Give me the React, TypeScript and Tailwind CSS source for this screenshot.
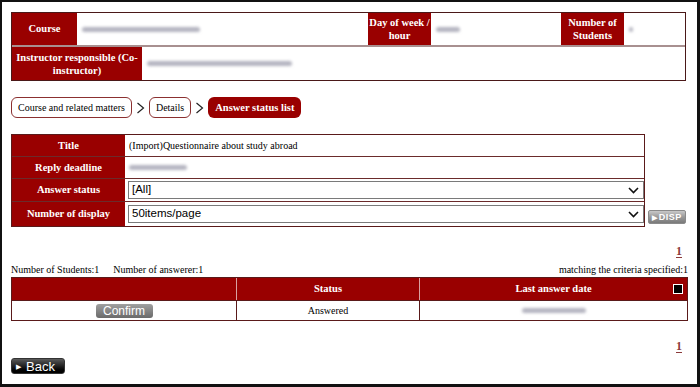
import React from "react";

const serif = { fontFamily: '"Liberation Serif", "Times New Roman", serif' };
const sans = { fontFamily: '"Liberation Sans", Arial, sans-serif' };

function Chevron() {
  return (
    <svg width="11" height="7" viewBox="0 0 11 7" className="shrink-0">
      <path d="M1 1 L5.5 5.5 L10 1" fill="none" stroke="#111" strokeWidth="1.6" />
    </svg>
  );
}

function SelectBox({ value }: { value: string }) {
  return (
    <div
      className="flex h-[18px] w-[516px] items-center justify-between border border-[#7a7a7a] bg-white pl-[3px] pr-[4px] text-[11.5px] leading-none text-black"
      style={sans}
    >
      <span>{value}</span>
      <Chevron />
    </div>
  );
}

function Blur({ w }: { w: number }) {
  return <div className="h-[5px] rounded-full bg-[#b4b4c0] blur-[1.5px]" style={{ width: w }} />;
}

function Crumb({ label }: { label: string }) {
  return (
    <div className="flex h-[21px] items-center rounded-[6px] border border-[#8b3030] bg-white px-[6px] text-[10px] text-black">
      {label}
    </div>
  );
}

function Arrow() {
  return (
    <svg width="9" height="14" viewBox="0 0 9 14" className="mx-[4px]">
      <path d="M1.5 2 L7.5 7 L1.5 12" fill="none" stroke="#222" strokeWidth="1.2" />
    </svg>
  );
}

export default function App() {
  return (
    <div
      className="box-border h-[387px] w-[700px] overflow-hidden border-b-[3px] border-l-2 border-r-[3px] border-t-2 border-[#111] bg-white"
      style={serif}
    >
      <div className="pl-[9px] pr-[11px] pt-[10px]">
        {/* Top info table */}
        <div className="w-[675px] border border-[#4a1818]">
          <div className="flex h-[34px] border-b-2 border-[#a89090]">
            <div className="flex w-[65px] items-center justify-center bg-[#990000] text-[10.5px] font-bold text-white">
              Course
            </div>
            <div className="flex w-[291px] items-center pl-[5px]">
              <Blur w={118} />
            </div>
            <div className="flex w-[63px] items-center justify-center bg-[#990000] text-center text-[10.5px] font-bold leading-[13px] text-white">
              Day of week / hour
            </div>
            <div className="flex w-[130px] items-center pl-[5px]">
              <Blur w={24} />
            </div>
            <div className="flex w-[63px] items-center justify-center bg-[#990000] text-center text-[10.5px] font-bold leading-[13px] text-white">
              Number of Students
            </div>
            <div className="flex flex-1 items-center pl-[5px]">
              <Blur w={4} />
            </div>
          </div>
          <div className="flex h-[33px]">
            <div className="flex w-[130px] items-center justify-center bg-[#990000] px-[2px] text-center text-[10.5px] font-bold leading-[13px] text-white">
              Instructor responsible (Co-instructor)
            </div>
            <div className="flex flex-1 items-center pl-[5px]">
              <Blur w={145} />
            </div>
          </div>
        </div>

        {/* Breadcrumb */}
        <div className="mt-[16px] flex items-center">
          <Crumb label="Course and related matters" />
          <Arrow />
          <Crumb label="Details" />
          <Arrow />
          <div className="flex h-[21px] items-center rounded-[6px] bg-[#990000] px-[7px] text-[10.5px] font-bold text-white">
            Answer status list
          </div>
        </div>

        {/* Form table */}
        <div className="mt-[16px] flex items-end">
          <div className="w-[637px] border border-[#5a1a1a]">
            <div className="flex h-[22px] border-b border-[#6b2b2b]">
              <div className="flex w-[113px] items-center justify-center bg-[#990000] text-[10.5px] font-bold text-white">
                Title
              </div>
              <div className="flex flex-1 items-center pl-[4px] text-[10px] text-black">
                (Import)Questionnaire about study abroad
              </div>
            </div>
            <div className="flex h-[22px] border-b border-[#6b2b2b]">
              <div className="flex w-[113px] items-center justify-center bg-[#990000] text-[10.5px] font-bold text-white">
                Reply deadline
              </div>
              <div className="flex flex-1 items-center pl-[4px]">
                <Blur w={58} />
              </div>
            </div>
            <div className="flex h-[23px] border-b border-[#6b2b2b]">
              <div className="flex w-[113px] items-center justify-center bg-[#990000] text-[10.5px] font-bold text-white">
                Answer status
              </div>
              <div className="flex flex-1 items-center pl-[3px]">
                <SelectBox value="[All]" />
              </div>
            </div>
            <div className="flex h-[24px]">
              <div className="flex w-[113px] items-center justify-center bg-[#990000] text-[10.5px] font-bold text-white">
                Number of display
              </div>
              <div className="flex flex-1 items-center pl-[3px]">
                <SelectBox value="50items/page" />
              </div>
            </div>
          </div>
          <div
            className="mb-[3px] ml-[3px] flex h-[14px] w-[38px] items-center justify-center rounded-[2px] border border-[#8a8a8a] bg-gradient-to-b from-[#c8c8c8] via-[#9a9a9a] to-[#7a7a7a] text-[9px] font-bold leading-none tracking-[0.5px] text-white"
            style={sans}
          >
            <span className="mr-[1px] text-[7px]">▶</span>DISP
          </div>
        </div>

        {/* Pager */}
        <div className="mt-[15px] flex justify-end pr-[4px]">
          <span className="text-[12px] font-bold text-[#8b3a3a] underline underline-offset-2">1</span>
        </div>

        {/* Counts */}
        <div className="mt-[3px] flex w-[677px] items-end justify-between text-[10px] leading-[13px] text-black">
          <span>
            Number of Students:1<span className="inline-block w-[14px]" />Number of answerer:1
          </span>
          <span>matching the criteria specified:1</span>
        </div>

        {/* Results table */}
        <div className="mt-[1px] w-[677px] border border-[#5a1a1a]">
          <div className="flex h-[22px] bg-[#990000] text-[10.5px] font-bold text-white">
            <div className="w-[225px] border-r border-[#d9a0a0]" />
            <div className="flex w-[183px] items-center justify-center border-r border-[#d9a0a0]">Status</div>
            <div className="relative flex flex-1 items-center justify-center">
              Last answer date
              <div className="absolute right-[4px] top-[6px] h-[10px] w-[10px] border border-white bg-black" />
            </div>
          </div>
          <div className="flex h-[20px] border-t border-[#5a1a1a] text-[10px] text-black">
            <div className="flex w-[225px] items-center justify-center border-r border-[#5a1a1a]">
              <div
                className="flex h-[14px] w-[57px] items-center justify-center rounded-[3px] bg-gradient-to-b from-[#a0a0a0] to-[#6a6a6a] text-[12px] leading-none text-white"
                style={sans}
              >
                Confirm
              </div>
            </div>
            <div className="flex w-[183px] items-center justify-center border-r border-[#5a1a1a]">Answered</div>
            <div className="flex flex-1 items-center justify-center">
              <Blur w={64} />
            </div>
          </div>
        </div>

        {/* Pager bottom */}
        <div className="mt-[16px] flex justify-end pr-[4px]">
          <span className="text-[12px] font-bold text-[#8b3a3a] underline underline-offset-2">1</span>
        </div>

        {/* Back */}
        <div
          className="mt-[3px] flex h-[16px] w-[54px] items-center rounded-[3px] border border-[#333] bg-gradient-to-b from-[#5a5a5a] via-[#222] to-[#000] pl-[4px] text-[13px] leading-none text-white"
          style={sans}
        >
          <span className="mr-[5px] text-[7px]">▶</span>Back
        </div>
      </div>
    </div>
  );
}
